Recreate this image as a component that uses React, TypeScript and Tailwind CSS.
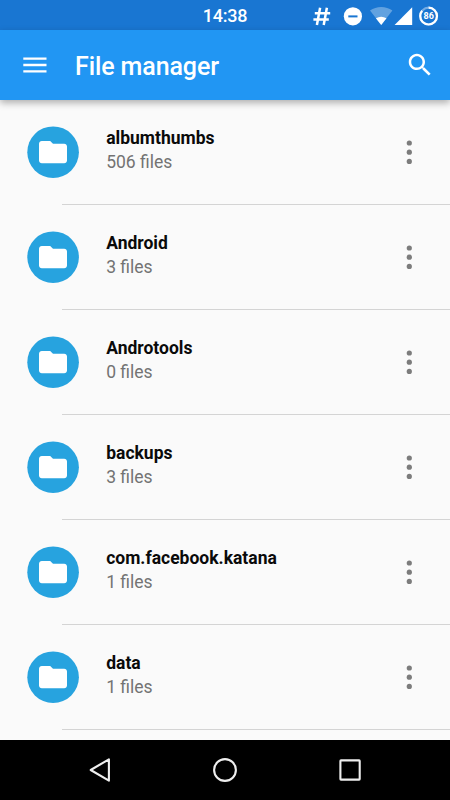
type Folder = { name: string; files: number };

const FOLDERS: Folder[] = [
  { name: "albumthumbs", files: 506 },
  { name: "Android", files: 3 },
  { name: "Androtools", files: 0 },
  { name: "backups", files: 3 },
  { name: "com.facebook.katana", files: 1 },
  { name: "data", files: 1 },
];

export default function App() {
  return (
    <div className="flex h-[800px] w-[450px] flex-col overflow-hidden bg-[#fafafa] font-['Roboto',sans-serif]">
      <StatusBar />
      <AppBar />
      <ul className="flex-1 overflow-hidden">
        {FOLDERS.map((f) => (
          <FolderRow key={f.name} folder={f} />
        ))}
      </ul>
      <NavBar />
    </div>
  );
}

function StatusBar() {
  return (
    <div className="grid h-[30px] shrink-0 grid-cols-3 items-center bg-[#1976d2] text-white">
      <span />
      <span className="pt-px text-center text-[18px] leading-[30px] font-medium tracking-[-0.2px]">14:38</span>
      <svg viewBox="300 0 150 30" className="h-[30px] w-[150px]" aria-hidden>
        {/* developer hash */}
        <path
          d="M320.1 6.8 316.9 23.9M326.9 6.8 323.7 23.9M314.8 12.3H330.2M313.4 18.5H328.8"
          stroke="#fff"
          strokeWidth="2.5"
          fill="none"
        />
        {/* do not disturb */}
        <circle cx="352.9" cy="15.3" r="9.1" fill="#fff" />
        <path d="M348.3 15.4H357.5" stroke="#1976d2" strokeWidth="2" />
        {/* wifi */}
        <path d="M381.2 24 370 9.6Q375 5.9 381.2 5.9T392.4 9.6Z" fill="#fff" fillOpacity="0.32" />
        <path d="M381.2 24 375.9 17.2Q381.2 14.2 386.5 17.2Z" fill="#fff" />
        <path d="M394.6 24H412.2V6.3Z" fill="#fff" />
        {/* battery ring */}
        <circle cx="428.6" cy="15.1" r="8.4" fill="none" stroke="#fff" strokeOpacity="0.4" strokeWidth="2.2" />
        <circle
          cx="428.6"
          cy="15.1"
          r="8.4"
          fill="none"
          stroke="#fff"
          strokeWidth="2.2"
          pathLength="100"
          strokeDasharray="86 14"
          transform="rotate(-90 428.6 15.1)"
        />
        <text x="428.7" y="18.4" textAnchor="middle" fontSize="9" fontWeight="700" fill="#fff">
          86
        </text>
      </svg>
    </div>
  );
}

function AppBar() {
  return (
    <header className="z-10 flex h-[70px] shrink-0 items-center bg-[#2196f3] pl-[23px] text-white shadow-[0_3px_7px_rgba(0,0,0,0.3)]">
      <button type="button" aria-label="Menu">
        <svg viewBox="0 0 24 18" className="h-[18px] w-6" aria-hidden>
          <path d="M0.3 2.7H23.5M0.3 9H23.5M0.3 15.3H23.5" stroke="currentColor" strokeWidth="2.3" />
        </svg>
      </button>
      <h1 className="ml-7 flex-1 pt-[4px] text-[25px] leading-[30px] font-medium tracking-[-0.1px]">File manager</h1>
      <button type="button" aria-label="Search" className="mr-[15px]">
        <svg viewBox="0 0 24 24" className="h-[30px] w-[30px]" fill="currentColor" aria-hidden>
          <path d="M15.5 14h-.79l-.28-.27C15.41 12.59 16 11.11 16 9.5 16 5.91 13.09 3 9.5 3S3 5.91 3 9.5 5.91 16 9.5 16c1.61 0 3.09-.59 4.23-1.57l.27.28v.79l5 4.99L20.49 19l-4.99-5zm-6 0C7.01 14 5 11.99 5 9.5S7.01 5 9.5 5 14 7.01 14 9.5 11.99 14 9.5 14z" />
        </svg>
      </button>
    </header>
  );
}

function FolderRow({ folder }: { folder: Folder }) {
  return (
    <li className="flex h-[105px] flex-col">
      <div className="flex h-[104px] items-center pl-[27px]">
        <svg viewBox="0 0 52 52" className="h-[52px] w-[52px]" aria-hidden>
          <circle cx="26.1" cy="26.2" r="25.8" fill="#27a3df" />
          <path
            transform="translate(9.2 9.3) scale(1.4)"
            fill="#fff"
            d="M10 4H4c-1.1 0-1.99.9-1.99 2L2 18c0 1.1.9 2 2 2h16c1.1 0 2-.9 2-2V8c0-1.1-.9-2-2-2h-8l-2-2z"
          />
        </svg>
        <div className="ml-[27.2px] flex-1 pb-[5px]">
          <p className="text-[17.5px] leading-6 font-bold text-[#0a0a0a]">{folder.name}</p>
          <p className="text-[17.5px] leading-6 text-[#737373]">{folder.files} files</p>
        </div>
        <button type="button" aria-label="More options" className="mr-[36px]">
          <svg viewBox="0 0 10 26" className="h-[26px] w-[10px]" fill="#7c7c7c" aria-hidden>
            <circle cx="5.3" cy="4" r="2.6" />
            <circle cx="5.3" cy="13.2" r="2.6" />
            <circle cx="5.3" cy="22.4" r="2.6" />
          </svg>
        </button>
      </div>
      <div className="ml-[62px] h-px bg-[#d4d4d4]" />
    </li>
  );
}

function NavBar() {
  return (
    <nav className="flex h-[60px] shrink-0 items-center justify-center gap-[97px] bg-black">
      <svg viewBox="0 0 28 28" className="h-7 w-7" aria-label="Back">
        <path d="M22.9 3.3V24.7L4.7 14Z" fill="none" stroke="#eee" strokeWidth="2.1" strokeLinejoin="round" />
      </svg>
      <svg viewBox="0 0 28 28" className="h-7 w-7" aria-label="Home">
        <circle cx="14" cy="14" r="10.9" fill="none" stroke="#eee" strokeWidth="2.1" />
      </svg>
      <svg viewBox="0 0 28 28" className="h-7 w-7" aria-label="Recents">
        <rect x="4.4" y="4.4" width="19.3" height="19.2" rx="0.6" fill="none" stroke="#eee" strokeWidth="2.1" />
      </svg>
    </nav>
  );
}
